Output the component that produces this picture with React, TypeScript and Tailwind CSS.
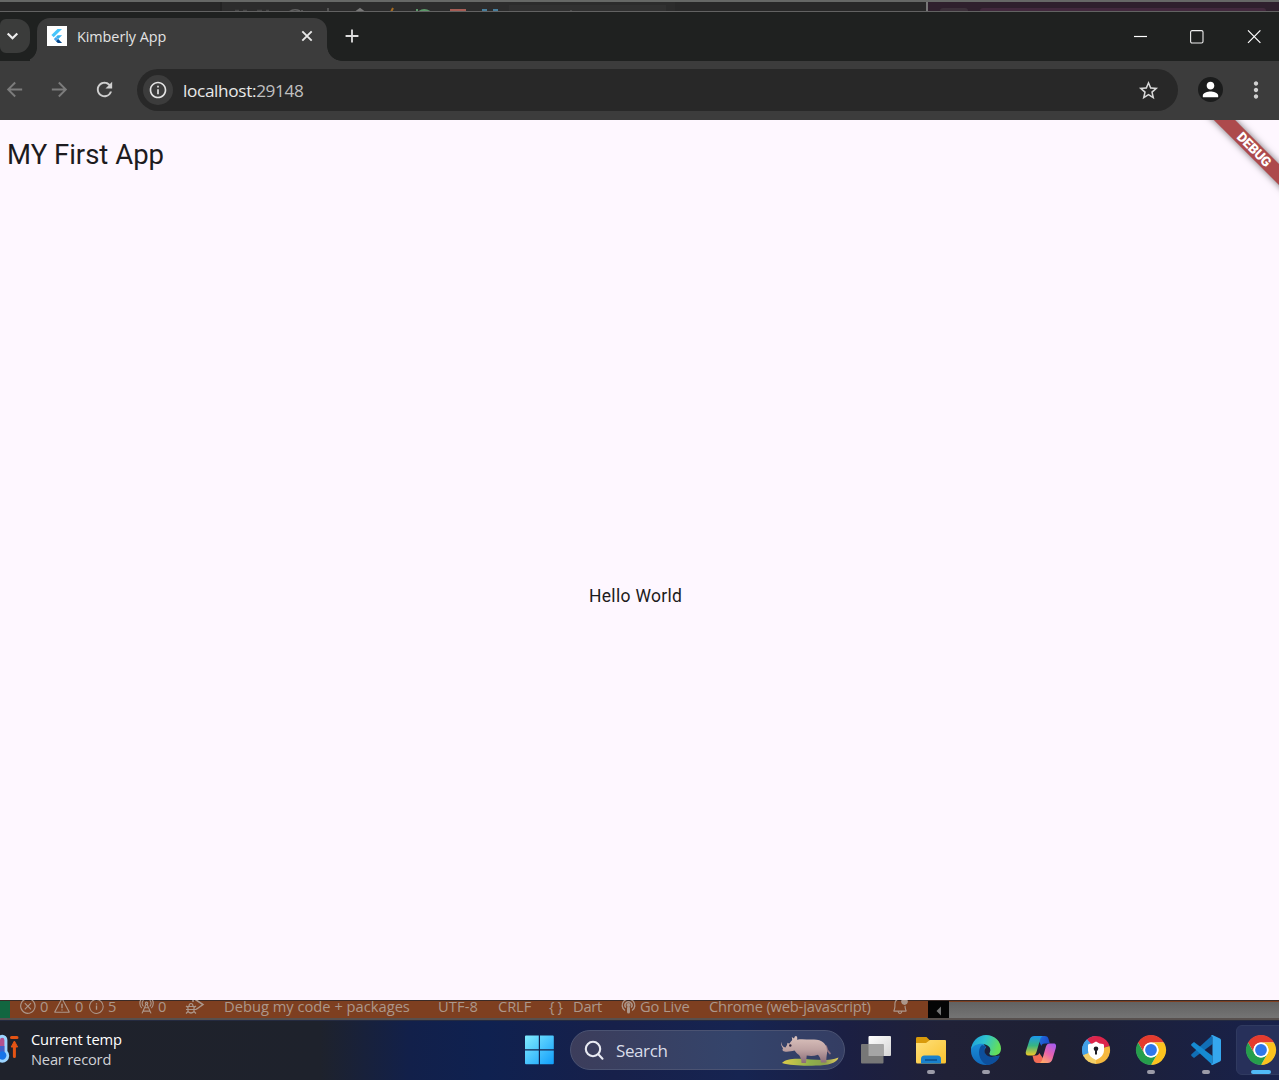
import React from "react";
import { MdArrowBack, MdArrowForward, MdRefresh, MdInfoOutline, MdStarBorder, MdPerson, MdMoreVert, MdAdd } from "react-icons/md";
import { VscError, VscWarning, VscInfo, VscRadioTower, VscBellDot } from "react-icons/vsc";

const ui = "font-['Open_Sans','Noto_Sans',sans-serif]";

function BackgroundWindows() {
  return (
    <div className="flex h-3 shrink-0 border-b border-[#626262] border-t-2 border-t-[#666866] bg-[#2a2a2a]">
      <div className="h-full w-[220px] shrink-0 bg-[#292929]" />
      <div className="h-full w-[455px] shrink-0 overflow-hidden bg-[#2c2c2c]">
        <svg width="455" height="9" viewBox="220 2 455 9" fill="none">
          <path d="M220 2v9" stroke="#232323" strokeWidth="4" />
          <path d="M235 10.500h4m4 0h4m10 0h5m4 0h3" stroke="#464646" strokeWidth="1.500" />
          <path d="M289 12q5-4 11-1m2-1v2M328 8v4" stroke="#606060" strokeWidth="1.500" />
          <path d="M356 12l4-3 4 3" stroke="#777" strokeWidth="2" />
          <path d="M393 8l-2 4" stroke="#a66b20" strokeWidth="2" />
          <path d="M417 9v3m2 0q5-4 11 0" stroke="#5c9869" strokeWidth="2" />
          <path d="M451 12v-2h14v2" stroke="#a65d55" strokeWidth="2" />
          <path d="M483 12v-2h4m6 0h4v2" stroke="#477e9c" strokeWidth="2" />
          <path d="M509 5h157v7H509z" fill="#313131" />
          <path d="M571 10v2" stroke="#666" />
        </svg>
      </div>
      <div className="h-full w-[251px] shrink-0 bg-[#292929]" />
      <div className="h-full w-[2px] shrink-0 bg-[#777]" />
      <div className="flex h-full grow items-end gap-3 bg-[#2f202d] pl-3">
        <div className="h-[3px] w-7 rounded-t-full bg-[#3c303a]" />
        <div className="h-[3px] w-[286px] rounded-t-full bg-[#42293d]" />
      </div>
    </div>
  );
}

function FlutterIcon() {
  return (
    <svg width="20" height="20" viewBox="0 0 20 20" className="shrink-0">
      <path d="M0 0h20v20H0z" fill="#fff" />
      <path d="M10.500 3H15L6.700 11.300 4.400 9z" fill="#47c5fb" />
      <path d="M10.600 9.200h4.500l-3.900 3.800-2.300-2z" fill="#36b2f0" />
      <path d="M8.900 11l2.300 2-2.200 2.200L6.800 13z" fill="#47a6ee" />
      <path d="M9 15.200l2.200-2.200 3.900 4h-4.300z" fill="#06498c" />
    </svg>
  );
}

function TitleBar() {
  return (
    <div className="flex h-[49px] shrink-0 bg-[#1f2120]">
      <div className="mt-[7px] flex h-[34px] w-[30px] shrink-0 items-center rounded-r-[13px] rounded-l-[6px] bg-[#3b3c3b]">
        <svg width="13" height="10" viewBox="0 0 13 10" className="ml-[6px]" fill="none" stroke="#eee" strokeWidth="2.200">
          <path d="M1.700 2.500l4.800 4.700 4.800-4.700" />
        </svg>
      </div>
      <div className="h-[13px] w-[7px] shrink-0 self-end bg-[radial-gradient(circle_at_-6px_0,#1f2120_12.5px,#3c3c3c_13.2px)]" />
      <div className="mt-[6px] flex w-[290px] shrink-0 items-start rounded-t-[13px] bg-[#3c3c3c] pl-[10px]">
        <div className="mt-2"><FlutterIcon /></div>
        <span className={`${ui} mt-[9px] ml-[10px] w-[218px] shrink-0 text-[14.4px] leading-5 tracking-[-0.05px] whitespace-nowrap text-[#e3e3e3]`}>Kimberly App</span>
        <svg width="18" height="18" viewBox="0 0 18 18" className="mt-[9px] ml-[3px] shrink-0" stroke="#e8e8e8" strokeWidth="1.900">
          <path d="M4.300 4.300l9.400 9.400m0-9.400l-9.400 9.400" />
        </svg>
      </div>
      <div className="h-[15px] w-[15px] shrink-0 self-end bg-[radial-gradient(circle_at_100%_0,#1f2120_14.5px,#3c3c3c_15.2px)]" />
      <MdAdd className="mt-[13px] -ml-px shrink-0 text-[#ddd]" size={22} />
      <div className="mt-[18px] mr-[17px] ml-auto flex gap-[42px]">
        <svg width="15" height="15" viewBox="0 0 15 15"><path d="M1 6.500h13" stroke="#fff" strokeWidth="1.200" /></svg>
        <svg width="15" height="15" viewBox="0 0 15 15"><rect x=".6" y=".6" width="12.400" height="12.400" rx="1.500" fill="none" stroke="#eee" strokeWidth="1.100" /></svg>
        <svg width="15" height="15" viewBox="0 0 15 15"><path d="M1 .4l12.400 12.400m0-12.400L1 12.800" stroke="#fff" strokeWidth="1.200" /></svg>
      </div>
    </div>
  );
}

function Toolbar() {
  return (
    <div className="flex h-[59px] shrink-0 items-center bg-[#3c3c3c] pb-[2px]">
      <MdArrowBack className="ml-[3px] shrink-0 text-[#7c7c7c]" size={23} />
      <MdArrowForward className="ml-[22px] shrink-0 text-[#7c7c7c]" size={23} />
      <MdRefresh className="ml-[22px] shrink-0 text-[#cfcfcf]" size={23} />
      <div className="mt-px ml-[21px] flex h-[42px] w-[1041px] shrink-0 items-center rounded-full bg-[#282828] pl-[6px]">
        <div className="flex size-[30px] shrink-0 items-center justify-center rounded-full bg-[#3c3c3c] text-[#e4e4e4]">
          <MdInfoOutline size={20} />
        </div>
        <span className={`${ui} mt-[2px] ml-[10px] text-[17.2px] tracking-[-0.34px] text-[#e8e8e8]`}>localhost:<span className="text-[#c0c0c0]">29148</span></span>
        <MdStarBorder className="mr-[18px] ml-auto text-[#d8d8d8]" size={23} />
      </div>
      <div className="ml-5 flex size-[25px] shrink-0 items-center justify-center rounded-full bg-[#1b1c1c] text-white">
        <MdPerson size={23} />
      </div>
      <MdMoreVert className="ml-[20px] shrink-0 text-[#d0d0d0]" size={26} />
    </div>
  );
}

function AppPage() {
  return (
    <div className="relative flex h-[880px] shrink-0 flex-col overflow-hidden bg-[#fef7ff] font-[Roboto,sans-serif] text-[#1d1b20]">
      <h1 className="mt-[17px] ml-[7px] text-[27.5px] leading-9 whitespace-nowrap">MY First App</h1>
      <p className="mt-[411px] ml-[589px] text-[17.5px] leading-6 tracking-[0.3px] whitespace-nowrap">Hello World</p>
      <div className="absolute top-[22px] left-[1194px] flex h-[15px] w-[120px] rotate-45 items-center justify-center bg-[#ad4a4c] text-[13.5px] leading-none font-black tracking-[-0.2px] text-white shadow-[0_0_7px_rgba(0,0,0,0.55)]">DEBUG</div>
    </div>
  );
}

function StatusBar() {
  return (
    <div className={`${ui} flex h-5 shrink-0 border-t border-b-2 border-t-[#3a2a26] border-b-[#57504e] bg-[#7e3f20] text-[14.7px] leading-3 whitespace-nowrap text-[#ac978b]`}>
      <div className="h-full w-[10px] shrink-0 bg-[#126640]" />
      <div className="flex h-[10px] w-[918px] shrink-0 items-center">
        <VscError className="ml-[9px] shrink-0" size={18} />
        <span className="ml-[3px] w-[13px]">0</span>
        <VscWarning className="shrink-0" size={18} />
        <span className="ml-[4px] w-[13px]">0</span>
        <VscInfo className="shrink-0" size={17} />
        <span className="ml-[3px] w-[29px]">5</span>
        <VscRadioTower className="shrink-0" size={18} />
        <span className="ml-[3px] w-[27px]">0</span>
        <svg width="20" height="18" viewBox="0 0 20 18" fill="none" stroke="currentColor" strokeWidth="1.500" className="shrink-0">
          <path d="M8 1L18 7.500l-7 5M8 1v4" />
          <path d="M3 9.500h6v5q-3 3-6 0zM4 9.500q0-3 2-3t2 3M3 12.500h6M1 9l2 1.500M11 9l-2 1.500M1 12.500h2m6 0h2M1 16.500l2-2m8 2l-2-2" strokeWidth="1.200" />
        </svg>
        <span className="ml-[19px] w-[214px]">Debug my code + packages</span>
        <span className="w-[60px] tracking-[0.1px]">UTF-8</span>
        <span className="w-[51px] tracking-[-0.1px]">CRLF</span>
        <span className="w-[24px] tracking-[3px]">{"{}"}</span>
        <span className="w-[48px] tracking-[-0.25px]">Dart</span>
        <svg width="15" height="16" viewBox="0 0 15 16" fill="none" stroke="currentColor" strokeWidth="1.400" className="shrink-0">
          <path d="M4 12.500a6.300 6.300 0 1 1 7 0M4.800 9.600a3.500 3.500 0 1 1 5.400 0" />
          <circle cx="7.500" cy="7" r="1.300" fill="currentColor" />
          <path d="M7.500 10v4" strokeWidth="3" strokeLinecap="round" />
        </svg>
        <span className="ml-[4px] w-[69px] tracking-[-0.1px]">Go Live</span>
        <span className="w-[182px] tracking-[-0.19px]">Chrome (web-javascript)</span>
        <VscBellDot className="shrink-0" size={18} />
      </div>
      <div className="flex w-[21px] shrink-0 items-center justify-center bg-[#050505] pt-[2px]">
        <svg width="6" height="10" viewBox="0 0 6 10"><path d="M5 .5v9L.5 5z" fill="#757575" /></svg>
      </div>
      <div className="mt-px grow bg-[linear-gradient(#626262,#747474)]" />
    </div>
  );
}

function Thermometer() {
  return (
    <svg width="20" height="32" viewBox="0 0 20 32" className="shrink-0">
      <path d="M-3 7a5.200 5.200 0 0 1 10.400 0v11a7 7 0 1 1-10.400 0z" fill="#9dd5ff" />
      <path d="M0 7a2.200 2.200 0 0 1 4.400 0v12H0z" fill="#b4518e" />
      <path d="M0 13h4.400v8H0z" fill="#425fc8" />
      <circle cx="2.200" cy="22.500" r="4.200" fill="#1673e8" />
      <path d="M11.500 4.500h5.500M14.400 23.500V13" stroke="#e45414" strokeWidth="3" strokeLinecap="round" />
      <path d="M14.400 8l3.200 6h-6.400z" fill="#e45414" stroke="#e45414" strokeLinejoin="round" />
    </svg>
  );
}

function WindowsLogo() {
  return (
    <svg width="30" height="30" viewBox="0 0 30 30" className="shrink-0">
      <defs><linearGradient id="win" x1="0" y1="0" x2="30" y2="30" gradientUnits="userSpaceOnUse"><stop stopColor="#83ecff" /><stop offset="1" stopColor="#0c9bfa" /></linearGradient></defs>
      <path d="M0 1.500a1 1 0 0 1 1-1h12.800v13.800H0zM15 .5h12.800a1 1 0 0 1 1 1v12.800H15zM0 15.500h13.800v13.800H1a1 1 0 0 1-1-1zM15 15.500h13.800v12.800a1 1 0 0 1-1 1H15z" fill="url(#win)" />
    </svg>
  );
}

function Rhino() {
  return (
    <svg width="60" height="34" viewBox="0 0 60 34" className="shrink-0">
      <defs>
        <linearGradient id="skin" x1="0" y1="0" x2="0" y2="1"><stop stopColor="#dcc3bd" /><stop offset="0.5" stopColor="#bfa3a3" /><stop offset="1" stopColor="#8a6c78" /></linearGradient>
        <linearGradient id="grass"><stop stopColor="#dccb49" /><stop offset="0.5" stopColor="#8fb04c" /><stop offset="0.75" stopColor="#8aa04c" /><stop offset="1" stopColor="#e3cc5e" /></linearGradient>
      </defs>
      <path d="M2 30C5 26.500 12 25.500 20 25.800C32 26.300 48 29 58.500 24.500C57 30 48 32.500 36 32.500C24 33 10 32.500 2 30Z" fill="url(#grass)" />
      <path d="M46 13q1 5 4 7.500" stroke="#927380" strokeWidth="1.700" fill="none" strokeLinecap="round" />
      <path d="M1 8.700C1.500 12 3 14 5.500 14.500L7 12L7.500 9.800C8.300 10.300 9 10.800 9.500 10.500C11 8 12 7.500 12.200 7L11.800 4L14 5.500C14.500 3.500 15.500 2.800 16.200 3C17.500 4 17.500 5.500 17 6.800C22 5.500 28 7 34 6.500C42 6.500 46.500 11 47 17C47.500 21 46 23 46.500 29.500H41C40.500 26 40 24 38 21.800C34 23.200 30 23.200 26.700 22.500L26 30H21.500C21.500 26.500 20.500 24 19 22C17 20.500 16 19.500 14.500 17.500C11.500 18 9 19 5.500 18.700C2.500 18.500 2 16.800 3 15.500C2 13.500 .5 11.500 1 8.700Z" fill="url(#skin)" />
      <circle cx="10.300" cy="12.500" r="1.200" fill="#30263e" />
    </svg>
  );
}

function TaskView() {
  return (
    <svg width="32" height="32" viewBox="0 0 32 32">
      <defs><linearGradient id="tv" x2="1" y2="1"><stop stopColor="#fff" /><stop offset="1" stopColor="#d5d5d5" /></linearGradient></defs>
      <rect x="8.500" y="2" width="22.500" height="20" rx="1" fill="url(#tv)" />
      <rect x="1" y="10" width="22.500" height="19.500" rx="1" fill="#777" />
      <path d="M8.500 10h15v12h-15z" fill="#a5a5a5" />
    </svg>
  );
}

function FolderIcon() {
  return (
    <svg width="32" height="32" viewBox="0 0 32 32">
      <defs><linearGradient id="fold" x2="1" y2="1"><stop stopColor="#ffe07b" /><stop offset="1" stopColor="#f9c22e" /></linearGradient></defs>
      <path d="M1 8V4.400Q1 3 2.500 3h9l3 3H30v8H1z" fill="#d99a0b" />
      <path d="M1 9h10l4-3h15q1 0 1 1v21q0 1.500-1.500 1.500h-27Q1 29.500 1 28z" fill="url(#fold)" />
      <path d="M6 29.500V25q0-3.500 3.500-3.500h13Q26 21.500 26 25v4.500z" fill="#1981cc" />
      <path d="M10 26h12" stroke="#0b4e8b" strokeWidth="1.500" />
    </svg>
  );
}

function EdgeIcon() {
  return (
    <svg width="32" height="32" viewBox="0 0 32 32">
      <defs>
        <linearGradient id="e1" x1="0" x2="1" y2=".3"><stop stopColor="#1a9bdd" /><stop offset=".5" stopColor="#2fc3cf" /><stop offset="1" stopColor="#63de5b" /></linearGradient>
        <linearGradient id="e2" x2="0" y2="1"><stop stopColor="#1a8fd8" /><stop offset="1" stopColor="#1068ba" /></linearGradient>
      </defs>
      <path d="M1 17C1 8 7 9 13 9L20 20C22 23.500 28 22 29.500 21.500C29 25 23 31 16 31C8 31 1 25 1 17Z" fill="url(#e2)" />
      <path d="M12 11C7 15 8 27 17 31C23 30.500 27 27.500 29 23.500C30 21.500 29 21.500 28 22C22 24.500 16 22.500 14.500 18C14 15 15 13.500 16.500 12.500Z" fill="#0d4f9c" />
      <path d="M1 16C1.500 7.500 8 1 16 1C25 1 31 8 31 14.500C31 19.500 27.500 21.500 24 21.500C19.500 21.500 18.500 20 19.500 18.500C21 16.500 20.500 13 17.500 11.500C12 8 3 10 1 16Z" fill="url(#e1)" />
      <path d="M19.500 18.500C21 16.500 20 13.800 17.500 13.500C14.500 13.500 13.800 17 15 19.300C16.500 22.500 21 24 26 22.500C22 22.800 18.500 21 19.500 18.500Z" fill="#1d213c" />
    </svg>
  );
}

function CopilotIcon() {
  return (
    <svg width="32" height="32" viewBox="0 0 32 32">
      <defs>
        <linearGradient id="c1" x2="0" y2="1"><stop stopColor="#1b98ee" /><stop offset=".5" stopColor="#38b580" /><stop offset="1" stopColor="#f2ca25" /></linearGradient>
        <linearGradient id="c2" x1=".8" x2=".2" y2="1"><stop stopColor="#a75ced" /><stop offset=".5" stopColor="#e963ac" /><stop offset="1" stopColor="#ffac66" /></linearGradient>
        <linearGradient id="c3" x2="1" y2=".3"><stop stopColor="#2273e2" /><stop offset="1" stopColor="#1b4cc9" /></linearGradient>
      </defs>
      <path d="M15 2H19.500C22 2 23 3.200 23.500 5L24.800 9.500H20C17.500 9.500 16.800 10.500 16.300 12L13 5Z" fill="url(#c3)" />
      <path d="M17 29H12.500C10 29 9.200 27.800 8.500 25.500L7.500 21.500H11C13 21.500 13.800 20.500 14.300 19L18.500 25Z" fill="#f26c55" />
      <path d="M9.500 2H18C16.200 2.500 15.600 4 15 6L11.500 18C10.800 20.500 9.500 21.500 7 21.500H3.500C1 21.500 .2 19.500 1 17L4.500 6C5.300 3.300 6.800 2 9.500 2Z" fill="url(#c1)" />
      <path d="M22.500 29H14.500C16.200 28.500 16.800 27 17.400 25L20.800 13C21.500 10.500 22.700 9.500 25 9.500H28.500C31 9.500 31.500 11.500 30.800 14L27.500 25C26.700 27.700 25.200 29 22.500 29Z" fill="url(#c2)" />
    </svg>
  );
}

function SecureBrowserIcon() {
  return (
    <svg width="32" height="32" viewBox="0 0 32 32">
      <path d="M16 16V2A14 14 0 0 0 3.900 23z" fill="#55a8ea" />
      <path d="M16 16L7 5.300a14 14 0 0 1 22.500 6.700z" fill="#dd254b" />
      <path d="M16 16l13.500-4A14 14 0 0 1 16 30z" fill="#f5b83e" />
      <path d="M16 16v14A14 14 0 0 1 3 21z" fill="#f3cf67" />
      <path d="M16 16L3 21A14 14 0 0 1 7 5.300z" fill="#42a0e8" />
      <path d="M16 7.500q3.500 2.500 7 2.500 1 0 1 1.500v5q0 6-8 9.500-8-3.500-8-9.500v-5q0-1.500 1-1.500 3.500 0 7-2.500z" fill="#fff" />
      <circle cx="16" cy="14.800" r="2.300" fill="#1c1d25" /><path d="M16 15v5.500" stroke="#1c1d25" strokeWidth="2" />
    </svg>
  );
}

function ChromeIcon() {
  return (
    <svg width="32" height="32" viewBox="0 0 32 32" className="shrink-0">
      <circle cx="16" cy="16" r="14.500" fill="#fff" />
      <path d="M3 8.500A15 15 0 0 1 29 8.500H16A7.500 7.500 0 0 0 9.500 19.750z" fill="#e33b2e" />
      <path d="M29 8.500A15 15 0 0 1 16 31l6.500-11.250A7.500 7.500 0 0 0 16 8.500z" fill="#fcc31e" />
      <path d="M16 31A15 15 0 0 1 3 8.500l6.500 11.250a7.500 7.500 0 0 0 13 0z" fill="#269e4c" />
      <circle cx="16" cy="16" r="7.500" fill="#fff" />
      <circle cx="16" cy="16" r="5.900" fill="#3077ea" />
    </svg>
  );
}

function CodeIcon() {
  return (
    <svg width="32" height="32" viewBox="0 0 32 32">
      <path d="M22.500 1v9L4 24 1.500 22q-.8-.9 0-1.700z" fill="#116fb6" />
      <path d="M22.500 31v-9L4 8 1.500 10q-.8.900 0 1.700z" fill="#168bd2" />
      <path d="M22.500 1l7.500 3.500q1 .5 1 1.700v19.600q0 1.200-1 1.700L22.500 31q-1 0-1.500-.8l1.500-1V2.800L21 1.800q.5-.8 1.500-.8z" fill="#35a7ef" />
    </svg>
  );
}

function TaskItem({ children, running }: { children: React.ReactNode; running?: boolean }) {
  return (
    <div className="flex h-full w-[55px] shrink-0 flex-col items-center pt-[13px]">
      {children}
      {running && <div className="mt-[4px] h-1 w-2 rounded-full bg-[#9b9ba8]" />}
    </div>
  );
}

function Taskbar() {
  return (
    <div className={`${ui} flex h-[60px] shrink-0 overflow-hidden border-t border-[#242a40] bg-[linear-gradient(90deg,#1f222b_0%,#1e222c_25%,#12204a_32%,#0f2150_38%,#17204a_48%,#162451_58%,#1b1f43_66%,#202137_74%,#1e2034_83%,#18214b_100%)]`}>
      <div className="mt-3 w-[31px] shrink-0"><Thermometer /></div>
      <div className="mt-[8px] w-[494px] shrink-0 text-[14.7px] leading-5 whitespace-nowrap">
        <div className="tracking-[-0.15px] text-white">Current temp</div>
        <div className="tracking-[-0.2px] text-[#d0d1d5]">Near record</div>
      </div>
      <div className="mt-[14px] w-[45px] shrink-0"><WindowsLogo /></div>
      <div className="mt-[9px] flex h-10 w-[275px] shrink-0 items-center rounded-full border border-[#4b5372] bg-[linear-gradient(90deg,#3c3d5b,#34446b_60%,#343d63)] pl-[13px]">
        <svg width="21" height="21" viewBox="0 0 21 21" fill="none" stroke="#e8eaf2" strokeWidth="2.100" strokeLinecap="round"><circle cx="9" cy="9" r="7.200" /><path d="M14.300 14.300l4.200 4.400" /></svg>
        <span className="mt-[2px] ml-[11px] text-[17px] tracking-[-0.4px] text-[#dadde9]">Search</span>
        <div className="mr-[4px] ml-auto"><Rhino /></div>
      </div>
      <div className="ml-[3.500px] flex">
        <TaskItem><TaskView /></TaskItem>
        <TaskItem running><FolderIcon /></TaskItem>
        <TaskItem running><EdgeIcon /></TaskItem>
        <TaskItem><CopilotIcon /></TaskItem>
        <TaskItem><SecureBrowserIcon /></TaskItem>
        <TaskItem running><ChromeIcon /></TaskItem>
        <TaskItem running><CodeIcon /></TaskItem>
      </div>
      <div className="mt-[4px] ml-[2.500px] flex h-[50px] w-[50px] shrink-0 flex-col items-center rounded-md border border-[#303a60] bg-[#27305a] pt-[8px]">
        <ChromeIcon />
        <div className="mt-[4px] h-1 w-5 shrink-0 rounded-full bg-[#51baf7]" />
      </div>
    </div>
  );
}

export default function App() {
  return (
    <div className="flex h-[1080px] w-[1279px] flex-col overflow-hidden">
      <BackgroundWindows />
      <TitleBar />
      <Toolbar />
      <AppPage />
      <StatusBar />
      <Taskbar />
    </div>
  );
}
